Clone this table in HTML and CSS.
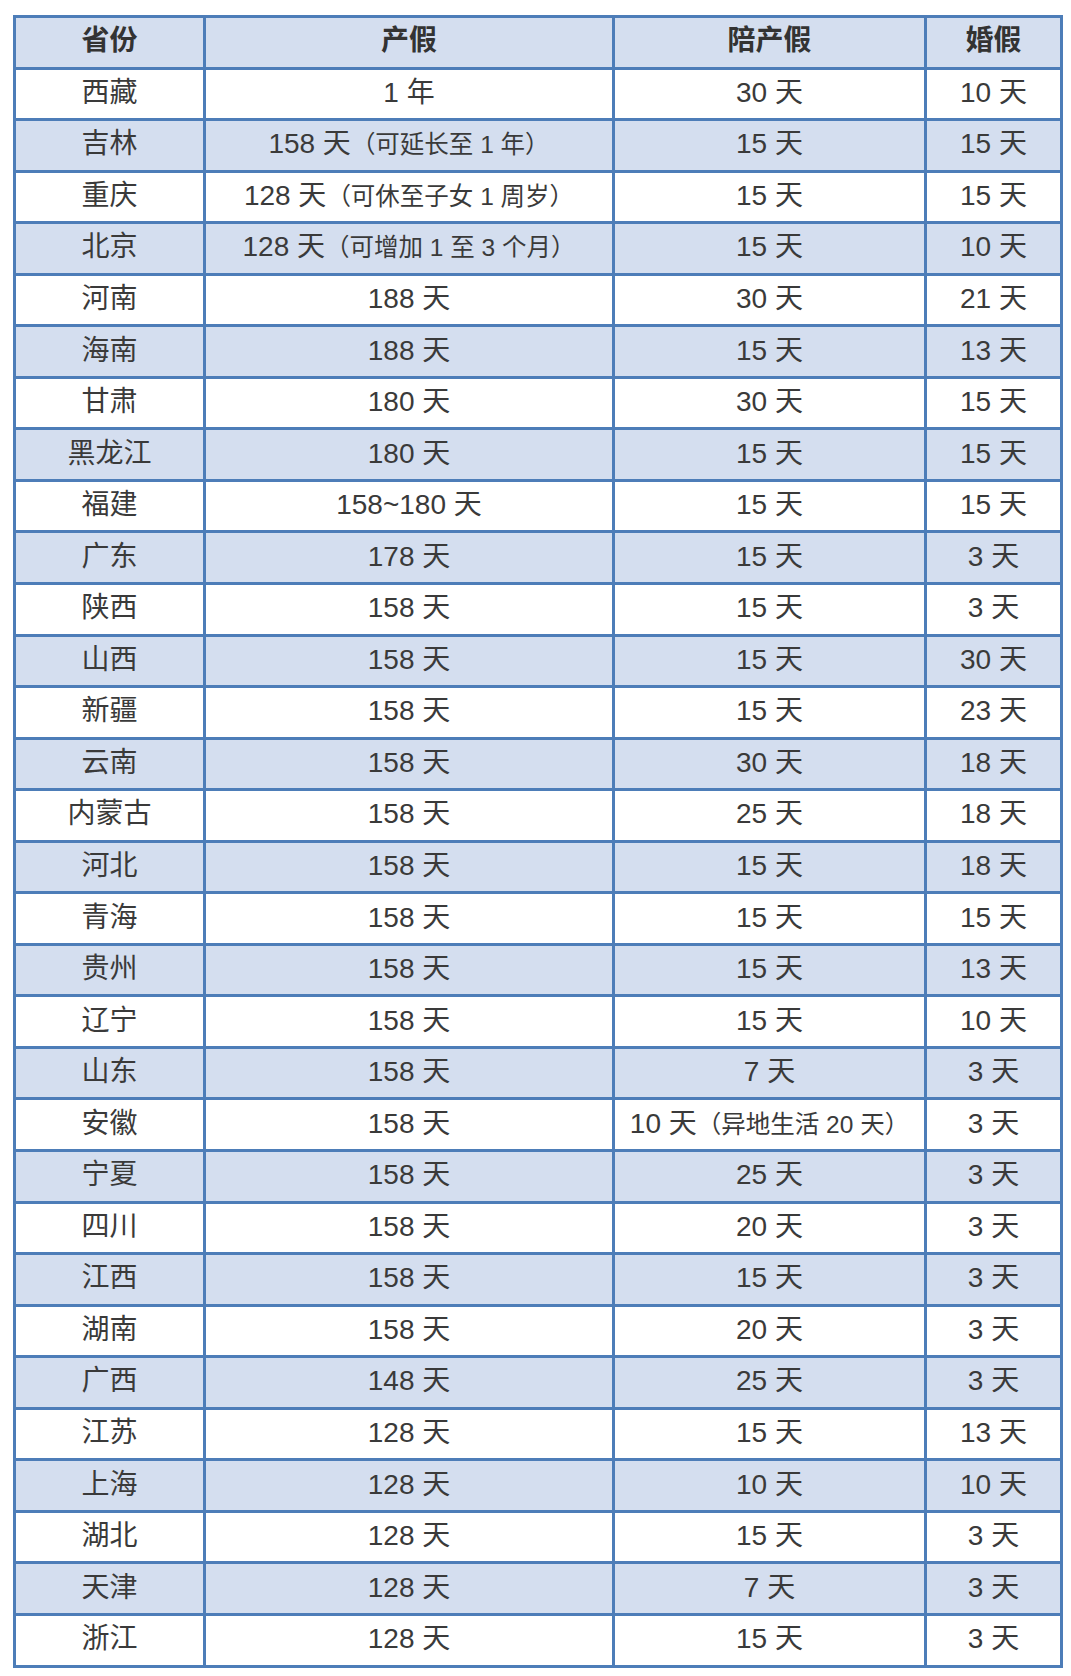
FILE: index.html
```html
<!DOCTYPE html>
<html lang="zh-CN">
<head>
<meta charset="utf-8">
<title>各省产假陪产假婚假</title>
<link rel="stylesheet" href="styles.css">
</head>
<body>
<table class="leave-table">
  <colgroup>
    <col class="c-prov"><col class="c-mat"><col class="c-pat"><col class="c-mar">
  </colgroup>
  <thead>
    <tr><th>省份</th><th>产假</th><th>陪产假</th><th>婚假</th></tr>
  </thead>
  <tbody>
    <tr><td>西藏</td><td>1 年</td><td>30 天</td><td>10 天</td></tr>
    <tr><td>吉林</td><td>158 天<span class="note">（可延长至 1 年）</span></td><td>15 天</td><td>15 天</td></tr>
    <tr><td>重庆</td><td>128 天<span class="note">（可休至子女 1 周岁）</span></td><td>15 天</td><td>15 天</td></tr>
    <tr><td>北京</td><td>128 天<span class="note">（可增加 1 至 3 个月）</span></td><td>15 天</td><td>10 天</td></tr>
    <tr><td>河南</td><td>188 天</td><td>30 天</td><td>21 天</td></tr>
    <tr><td>海南</td><td>188 天</td><td>15 天</td><td>13 天</td></tr>
    <tr><td>甘肃</td><td>180 天</td><td>30 天</td><td>15 天</td></tr>
    <tr><td>黑龙江</td><td>180 天</td><td>15 天</td><td>15 天</td></tr>
    <tr><td>福建</td><td>158~180 天</td><td>15 天</td><td>15 天</td></tr>
    <tr><td>广东</td><td>178 天</td><td>15 天</td><td>3 天</td></tr>
    <tr><td>陕西</td><td>158 天</td><td>15 天</td><td>3 天</td></tr>
    <tr><td>山西</td><td>158 天</td><td>15 天</td><td>30 天</td></tr>
    <tr><td>新疆</td><td>158 天</td><td>15 天</td><td>23 天</td></tr>
    <tr><td>云南</td><td>158 天</td><td>30 天</td><td>18 天</td></tr>
    <tr><td>内蒙古</td><td>158 天</td><td>25 天</td><td>18 天</td></tr>
    <tr><td>河北</td><td>158 天</td><td>15 天</td><td>18 天</td></tr>
    <tr><td>青海</td><td>158 天</td><td>15 天</td><td>15 天</td></tr>
    <tr><td>贵州</td><td>158 天</td><td>15 天</td><td>13 天</td></tr>
    <tr><td>辽宁</td><td>158 天</td><td>15 天</td><td>10 天</td></tr>
    <tr><td>山东</td><td>158 天</td><td>7 天</td><td>3 天</td></tr>
    <tr><td>安徽</td><td>158 天</td><td>10 天<span class="note">（异地生活 20 天）</span></td><td>3 天</td></tr>
    <tr><td>宁夏</td><td>158 天</td><td>25 天</td><td>3 天</td></tr>
    <tr><td>四川</td><td>158 天</td><td>20 天</td><td>3 天</td></tr>
    <tr><td>江西</td><td>158 天</td><td>15 天</td><td>3 天</td></tr>
    <tr><td>湖南</td><td>158 天</td><td>20 天</td><td>3 天</td></tr>
    <tr><td>广西</td><td>148 天</td><td>25 天</td><td>3 天</td></tr>
    <tr><td>江苏</td><td>128 天</td><td>15 天</td><td>13 天</td></tr>
    <tr><td>上海</td><td>128 天</td><td>10 天</td><td>10 天</td></tr>
    <tr><td>湖北</td><td>128 天</td><td>15 天</td><td>3 天</td></tr>
    <tr><td>天津</td><td>128 天</td><td>7 天</td><td>3 天</td></tr>
    <tr><td>浙江</td><td>128 天</td><td>15 天</td><td>3 天</td></tr>
  </tbody>
</table>
</body>
</html>
```
FILE: styles.css
```css
html, body {
  margin: 0;
  padding: 0;
  background: #ffffff;
}

body {
  font-family: "Liberation Sans", "Noto Sans CJK SC", sans-serif;
  color: #3a3a3a;
}

.leave-table {
  margin: 15px 0 0 13px;
  width: 1050px;
  table-layout: fixed;
  border-collapse: separate;
  border-spacing: 0;
  border-top: 3px solid #4d7db8;
  border-left: 3px solid #4d7db8;
}

.c-prov { width: 190px; }
.c-mat { width: 409px; }
.c-pat { width: 312px; }
.c-mar { width: 136px; }

.leave-table th,
.leave-table td {
  box-sizing: border-box;
  height: 51.56px;
  padding: 0 0 2px 0;
  text-align: center;
  vertical-align: middle;
  border-right: 3px solid #4d7db8;
  border-bottom: 3px solid #4d7db8;
  font-size: 28px;
  line-height: 1;
  white-space: nowrap;
}

.leave-table th {
  font-weight: 700;
  color: #333333;
  background: #d4deef;
}

.leave-table tbody tr:nth-child(even) td {
  background: #d4deef;
}

.note {
  font-size: 24.5px;
}
```
